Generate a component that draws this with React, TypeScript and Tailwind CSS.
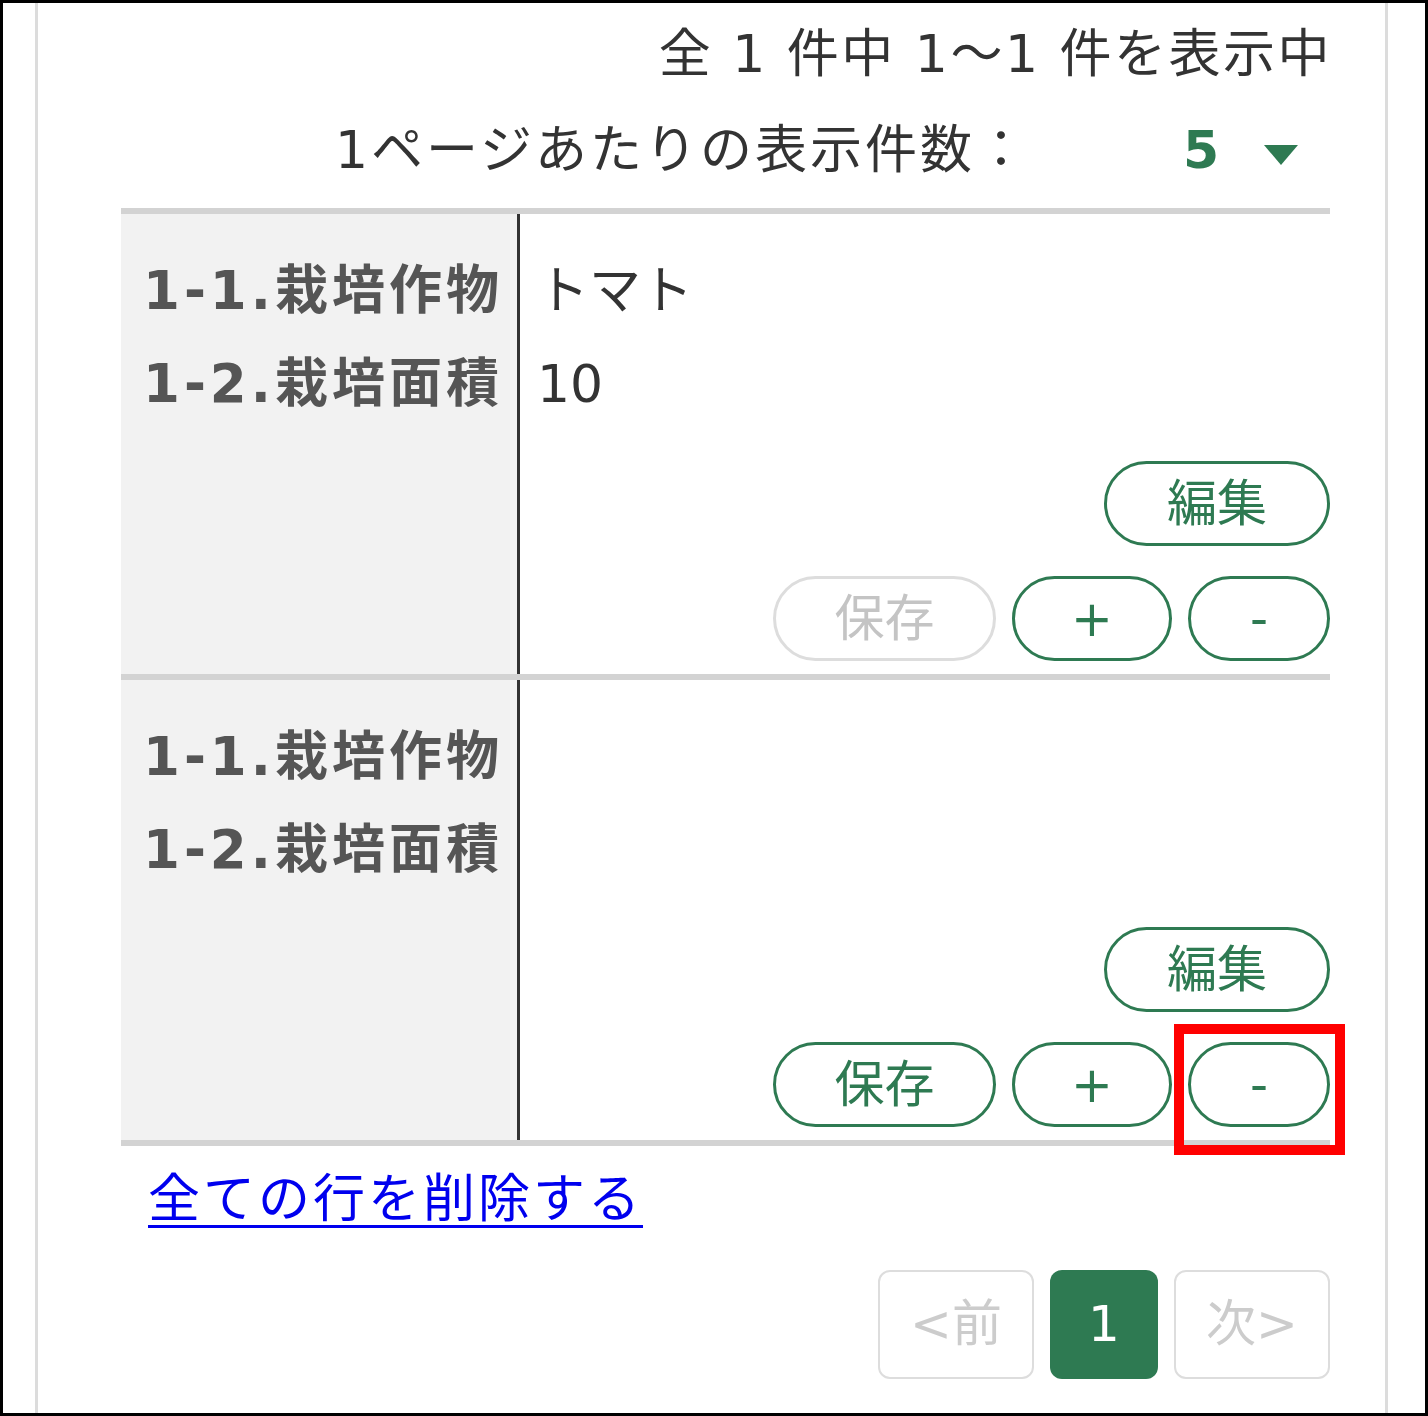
import React from "react";

const FONT = { fontFamily: '"DejaVu Sans", "Noto Sans CJK JP", sans-serif' };

function Btn({
  label,
  w,
  disabled,
}: {
  label: string;
  w: string;
  disabled?: boolean;
}) {
  return (
    <div
      className={
        "h-[85px] rounded-full border-[3px] flex items-center justify-center text-[50px] leading-none bg-white " +
        w +
        (disabled ? " border-[#dddddd] text-[#c4c4c4]" : " border-[#2e7a52] text-[#2e7a52]")
      }
    >
      {label}
    </div>
  );
}

function Row({ crop, area, highlight }: { crop: string; area: string; highlight?: boolean }) {
  return (
    <div className="grid grid-cols-[399px_1fr] border-b-[6px] border-[#d3d3d3]">
      <div className="bg-[#f2f2f2] border-r-[3px] border-[#333333] pl-[22px] pt-[30px]">
        <div className="h-[93px] flex items-center text-[53px] font-bold text-[#555555] whitespace-nowrap tracking-[4px]">
          1-1.栽培作物
        </div>
        <div className="h-[93px] flex items-center text-[53px] font-bold text-[#555555] whitespace-nowrap tracking-[4px]">
          1-2.栽培面積
        </div>
      </div>
      <div className="pl-[17px] pt-[30px] pb-[13px] flex flex-col">
        <div className="h-[93px] flex items-center text-[52px] text-[#333333]">{crop}</div>
        <div className="h-[93px] flex items-center text-[52px] text-[#333333]">{area}</div>
        <div className="mt-[31px] flex justify-end">
          <Btn label="編集" w="w-[226px]" />
        </div>
        <div className="mt-[30px] flex justify-end gap-[16px]">
          <Btn label="保存" w="w-[223px]" disabled={!highlight} />
          <Btn label="+" w="w-[160px]" />
          <div className="relative">
            <Btn label="-" w="w-[142px]" />
            {highlight && (
              <span className="absolute left-[-14px] right-[-15px] top-[-18px] bottom-[-28px] border-[10px] border-[#ff0000]" />
            )}
          </div>
        </div>
      </div>
    </div>
  );
}

export default function App() {
  return (
    <div
      className="w-[1428px] h-[1416px] bg-white border-[3px] border-black flex"
      style={FONT}
    >
      <div className="ml-[32px] w-[1353px] h-full border-x-[3px] border-[#dcdcdc] pl-[83px] pr-[55px]">
        <div className="mt-[12px] h-[78px] flex items-center justify-end text-[52px] text-[#333333] whitespace-nowrap tracking-[2.5px] mr-[-2px]">
          全 1 件中 1～1 件を表示中
        </div>
        <div className="mt-[18px] h-[78px] flex items-center justify-end text-[52px] text-[#333333] whitespace-nowrap">
          <span className="tracking-[3px]">1ページあたりの表示件数：</span>
          <div className="w-[300px] flex items-center">
            <span className="ml-[153px] font-bold text-[#2e7a52]">5</span>
            <svg className="ml-[44px] mt-[10px]" width="36" height="22" viewBox="0 0 36 22">
              <polygon points="1,1 35,1 18,21" fill="#2e7a52" />
            </svg>
          </div>
        </div>
        <div className="mt-[19px] border-t-[6px] border-[#d3d3d3]">
          <Row crop="トマト" area="10" />
          <Row crop="" area="" highlight />
        </div>
        <div className="mt-[14px] ml-[27px] h-[78px] flex items-center">
          <a
            href="#"
            className="text-[52px] text-[#0000ee] underline decoration-[3px] underline-offset-[8px] whitespace-nowrap tracking-[3px]"
          >
            全ての行を削除する
          </a>
        </div>
        <div className="mt-[32px] flex justify-end gap-[16px]">
          <div className="w-[156px] h-[109px] rounded-[12px] border-[2px] border-[#dddddd] flex items-center justify-center text-[50px] text-[#cccccc]">
            &lt;前
          </div>
          <div className="w-[108px] h-[109px] rounded-[12px] bg-[#2e7a52] flex items-center justify-center text-[50px] text-white">
            1
          </div>
          <div className="w-[156px] h-[109px] rounded-[12px] border-[2px] border-[#dddddd] flex items-center justify-center text-[50px] text-[#cccccc]">
            次&gt;
          </div>
        </div>
      </div>
    </div>
  );
}
